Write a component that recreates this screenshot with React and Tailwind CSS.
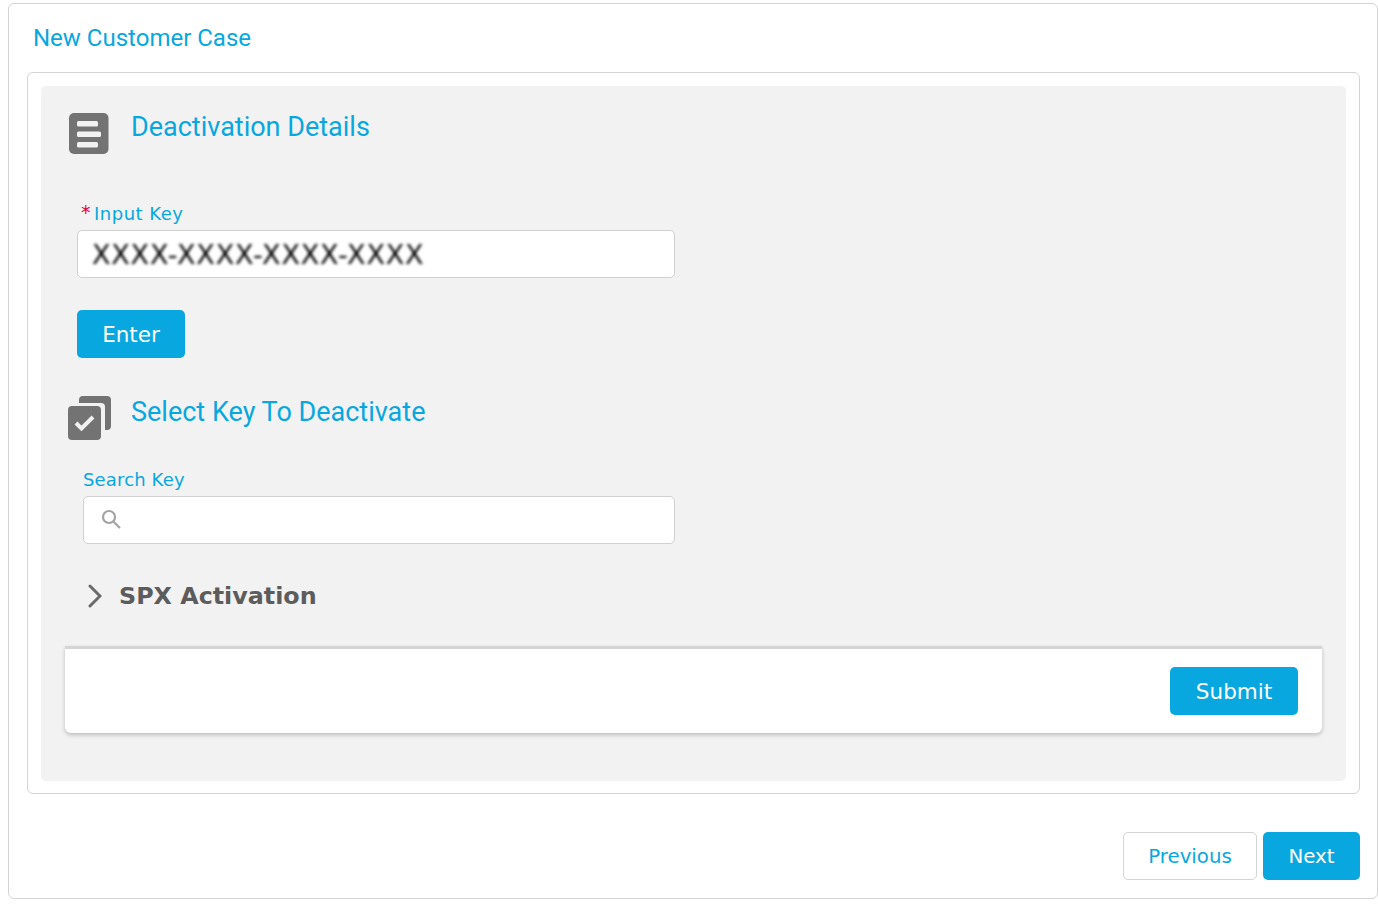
export default function App() {
  const dv = "font-['DejaVu_Sans',sans-serif]";
  const rb = "font-['Roboto',sans-serif]";
  return (
    <div className="pt-[3px] pl-2 bg-white h-[918px] overflow-hidden">
      <div className="w-[1370px] h-[896px] border border-[#d4d4d4] rounded-[6px] bg-white flex flex-col">
        <h1 className={`${rb} text-[24px] leading-[28px] text-[#08a7e0] ml-[24px] mt-[20px] h-[48px]`}>New Customer Case</h1>
        <div className="ml-[18px] w-[1333px] h-[722px] border border-[#d4d4d4] rounded-[6px] p-[13px]">
          <div className="h-[695px] bg-[#f2f2f2] rounded-[5px] px-6 flex flex-col">
            <div className="flex h-[104px] pt-[27px]">
              <svg viewBox="0 0 40 41" className="w-10 h-[41px] ml-1 shrink-0">
                <rect width="39.5" height="41" rx="5" fill="#737373" />
                <rect x="8" y="8" width="21" height="5.5" rx="1.5" fill="#f2f2f2" />
                <rect x="8" y="18.5" width="24" height="5.5" rx="1.5" fill="#f2f2f2" />
                <rect x="8" y="29" width="21" height="5.5" rx="1.5" fill="#f2f2f2" />
              </svg>
              <h2 className={`${rb} text-[27px] leading-[28px] text-[#08a7e0] ml-[22px]`}>Deactivation Details</h2>
            </div>
            <label className={`${dv} ml-4 h-[22px] text-[18px] tracking-[0.5px] leading-[22px] flex text-[#08a7e0] mt-[13px]`}>
              <span className="text-[#e4003a] w-[13px] text-[19px] leading-[19px]">*</span>
              <span>Input Key</span>
            </label>
            <div className="ml-3 mt-[5px] w-[598px] h-[48px] bg-white border border-[#d0d0d0] rounded-[5px] flex items-center pl-[14px]">
              <span className={`${dv} text-[27px] tracking-[0.8px] text-black blur-[1.4px] pt-[2px]`}>XXXX-XXXX-XXXX-XXXX</span>
            </div>
            <button className={`${dv} ml-3 mt-8 w-[108px] h-12 pt-[2px] bg-[#08a7e0] rounded-[5px] text-white text-[21.5px]`}>Enter</button>
            <div className="flex mt-[39px] h-[64px]">
              <svg viewBox="0 0 43 44" className="w-[43px] h-11 ml-[3px] -mt-px shrink-0">
                <path d="M11 4a4 4 0 0 1 4-4h24a4 4 0 0 1 4 4v26a4 4 0 0 1-4 4h-2V11a4 4 0 0 0-4-4H11z" fill="#737373" />
                <rect x="0" y="10" width="33" height="34" rx="4" fill="#737373" />
                <path d="M8 27l5.5 5.5L25 21" fill="none" stroke="#f2f2f2" strokeWidth="4" />
              </svg>
              <h2 className={`${rb} text-[27px] leading-[28px] text-[#08a7e0] ml-[20px] mt-px`}>Select Key To Deactivate</h2>
            </div>
            <label className={`${dv} ml-[18px] mt-[8px] h-[22px] text-[18px] tracking-[0.15px] leading-[22px] text-[#08a7e0]`}>Search Key</label>
            <div className="ml-[18px] mt-[5px] w-[592px] h-[48px] bg-white border border-[#d0d0d0] rounded-[5px] flex items-center pl-[17px]">
              <svg viewBox="0 0 20 20" className="w-5 h-5 -mt-[2px] text-[#a3a3a3]" fill="none" stroke="currentColor" strokeWidth="2.2">
                <circle cx="8" cy="8" r="6" />
                <path d="M12.5 12.5L19 19" />
              </svg>
            </div>
            <div className="flex items-center mt-[35px] h-[34px]">
              <svg viewBox="0 0 14 24" className="w-[14px] h-6 ml-[23px] shrink-0" fill="none" stroke="#6a6a6a" strokeWidth="3" strokeLinecap="round">
                <path d="M2 2l10 10-10 10" />
              </svg>
              <span className={`${dv} font-bold text-[23.8px] text-[#5c5c5c] ml-[17px] pt-px`}>SPX Activation</span>
            </div>
            <div className="mt-[33px] h-[87px] bg-white border-t-[3px] border-[#d4d4d4] rounded-b-[6px] shadow-[0_2px_4px_rgba(0,0,0,0.22)] flex items-start justify-end pt-[18px] pr-6">
              <button className={`${dv} w-[128px] h-12 pt-[2px] bg-[#08a7e0] rounded-[5px] text-white text-[21.5px]`}>Submit</button>
            </div>
          </div>
        </div>
        <div className="mt-[38px] flex justify-end gap-[6px] pr-[17px]">
          <button className={`${dv} w-[134px] h-12 pt-px bg-white border border-[#d4d4d4] rounded-[5px] text-[#08a7e0] text-[19.8px]`}>Previous</button>
          <button className={`${dv} w-[97px] h-12 pt-px bg-[#08a7e0] rounded-[5px] text-white text-[19.8px]`}>Next</button>
        </div>
      </div>
    </div>
  );
}
